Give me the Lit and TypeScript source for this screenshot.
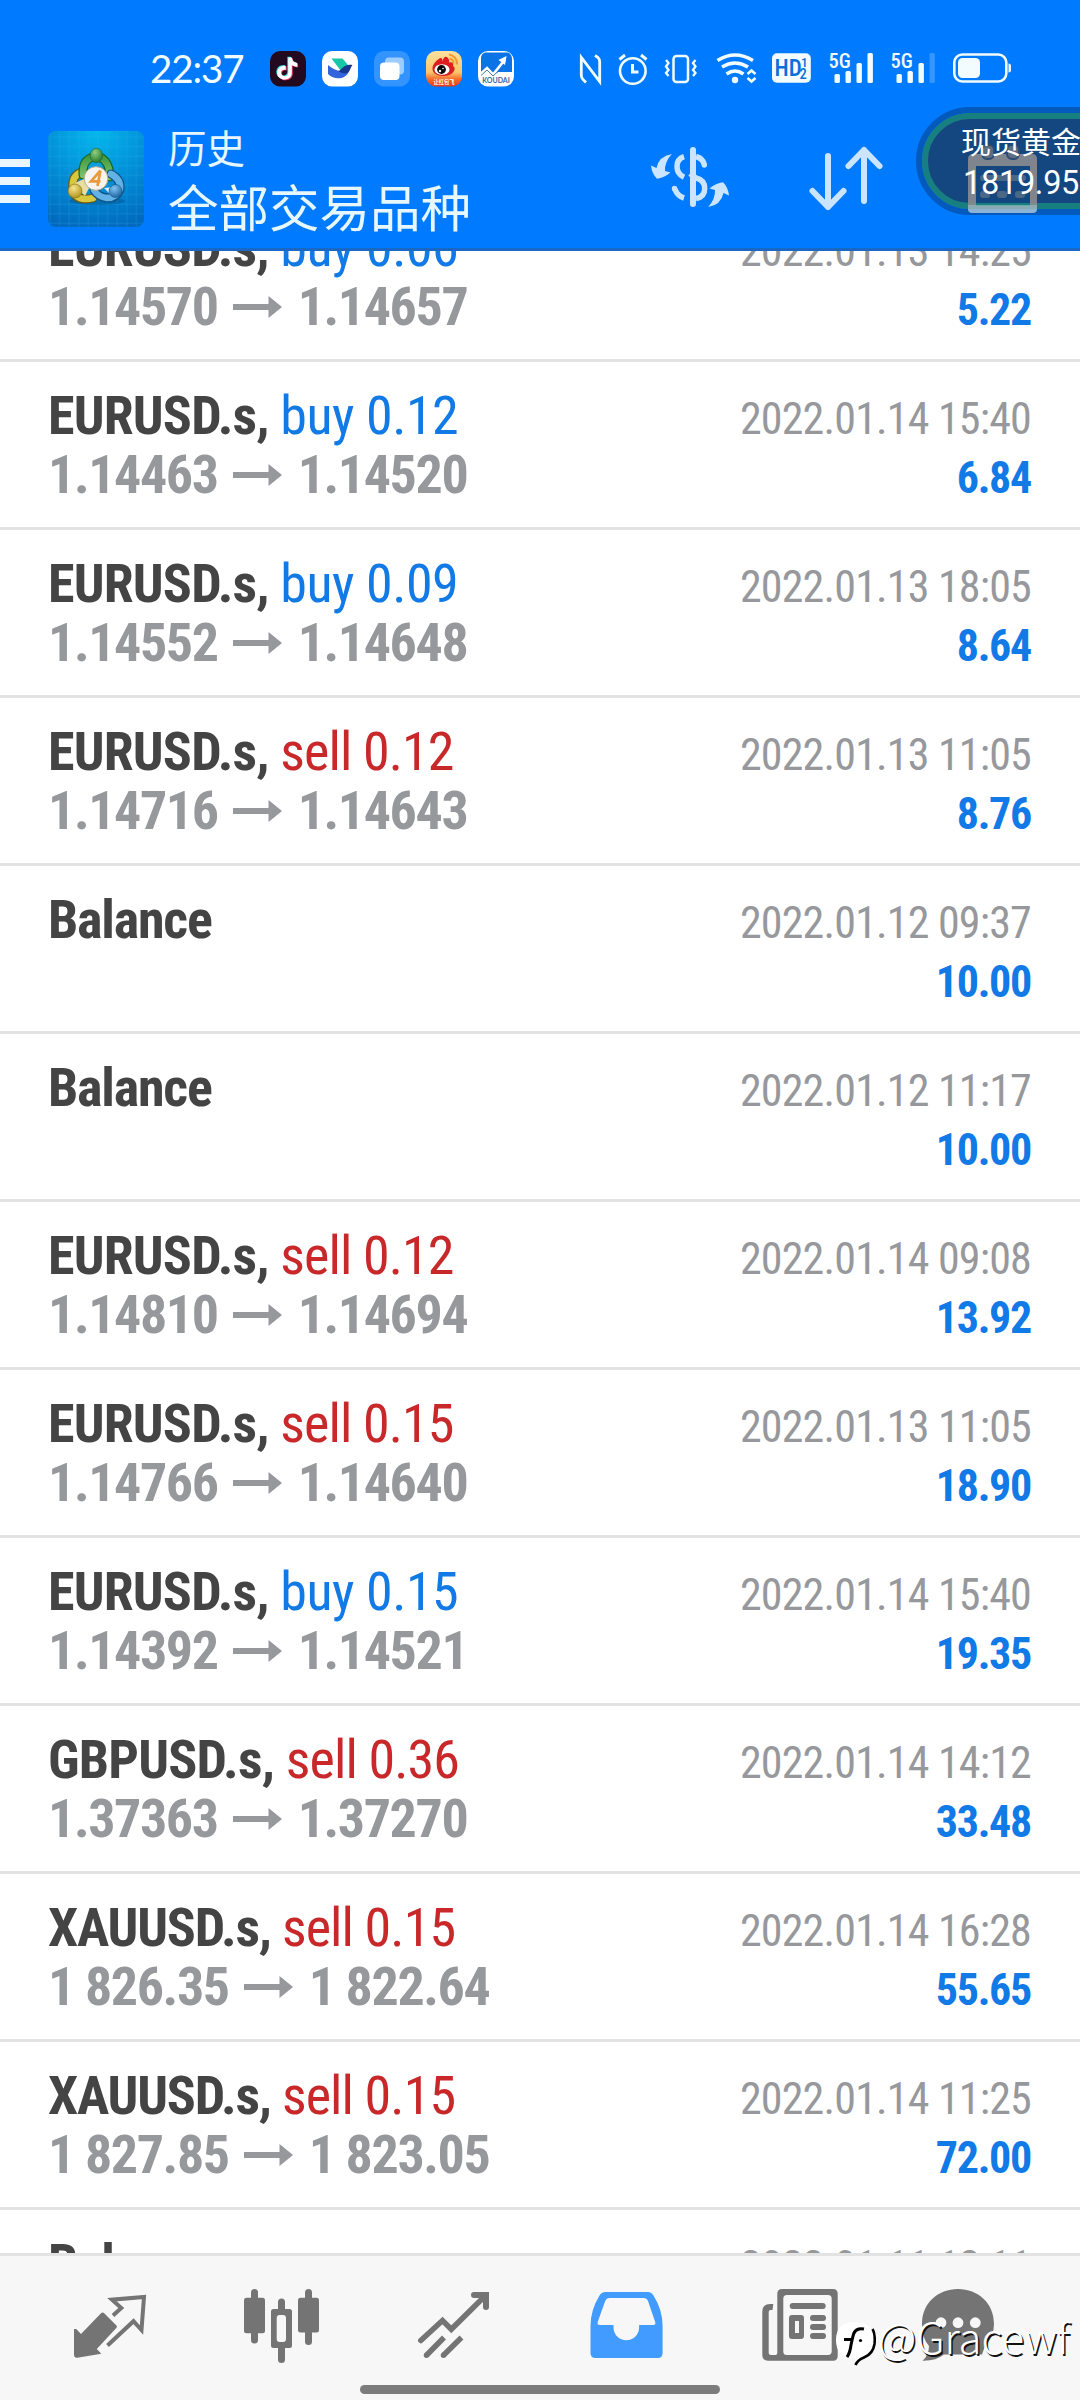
import { LitElement, html, svg, css, nothing } from 'lit';
import { customElement, property } from 'lit/decorators.js';

interface Deal {
  symbol: string;
  side?: 'buy' | 'sell';
  volume?: string;
  open?: string;
  close?: string;
  time: string;
  profit: string;
}

const deals: Deal[] = [
  { symbol: 'EURUSD.s', side: 'buy', volume: '0.06', open: '1.14570', close: '1.14657', time: '2022.01.13 14:25', profit: '5.22' },
  { symbol: 'EURUSD.s', side: 'buy', volume: '0.12', open: '1.14463', close: '1.14520', time: '2022.01.14 15:40', profit: '6.84' },
  { symbol: 'EURUSD.s', side: 'buy', volume: '0.09', open: '1.14552', close: '1.14648', time: '2022.01.13 18:05', profit: '8.64' },
  { symbol: 'EURUSD.s', side: 'sell', volume: '0.12', open: '1.14716', close: '1.14643', time: '2022.01.13 11:05', profit: '8.76' },
  { symbol: 'Balance', time: '2022.01.12 09:37', profit: '10.00' },
  { symbol: 'Balance', time: '2022.01.12 11:17', profit: '10.00' },
  { symbol: 'EURUSD.s', side: 'sell', volume: '0.12', open: '1.14810', close: '1.14694', time: '2022.01.14 09:08', profit: '13.92' },
  { symbol: 'EURUSD.s', side: 'sell', volume: '0.15', open: '1.14766', close: '1.14640', time: '2022.01.13 11:05', profit: '18.90' },
  { symbol: 'EURUSD.s', side: 'buy', volume: '0.15', open: '1.14392', close: '1.14521', time: '2022.01.14 15:40', profit: '19.35' },
  { symbol: 'GBPUSD.s', side: 'sell', volume: '0.36', open: '1.37363', close: '1.37270', time: '2022.01.14 14:12', profit: '33.48' },
  { symbol: 'XAUUSD.s', side: 'sell', volume: '0.15', open: '1 826.35', close: '1 822.64', time: '2022.01.14 16:28', profit: '55.65' },
  { symbol: 'XAUUSD.s', side: 'sell', volume: '0.15', open: '1 827.85', close: '1 823.05', time: '2022.01.14 11:25', profit: '72.00' },
  { symbol: 'Balance', time: '2022.01.11 12:11', profit: '10.00' },
];

@customElement('status-bar')
export class StatusBar extends LitElement {
  static styles = css`
    :host { display: flex; height: 40px; padding: 49px 0 0 150px; color: #f2fcff; }
    .time { width: 120px; font: 400 38.500px/38px Lato, sans-serif; letter-spacing: -1.1px; }
    .apps { display: flex; gap: 16px; padding-top: 2px; }
    .system { display: flex; gap: 16px; margin-left: 66px; padding-top: 1px; }
    svg { display: block; overflow: visible; }
    .label { font-family: Roboto, sans-serif; font-weight: 500; font-stretch: 75%; }
    .tiny { font-family: Lato, "Noto Sans CJK SC", sans-serif; font-weight: 700; }
  `;

  private signal(x: number, full: boolean) {
    return html`<svg width="46" height="40" viewBox="${x - 1} 50 46 40">
      <text class="label" x=${x - 0.5} y="68" font-size="20.500" fill="#f2fcff">5G</text>
      <g fill="#f2fcff">
        <rect x=${x + 5.5} y="74" width="5.4" height="9" rx="1.5"/>
        <rect x=${x + 16.5} y="71" width="5.4" height="12" rx="1.5"/>
        <rect x=${x + 27.5} y="63" width="5.4" height="20" rx="1.5"/>
        <rect x=${x + 38.5} y="53" width="5.4" height="30" rx="1.5" opacity=${full ? 1 : 0.22}/>
      </g>
    </svg>`;
  }

  render() {
    const note = 'M18.2 6.500h3.600c.3 3.400 2.400 5.200 5.400 5.500v3.800c-2 0-3.800-.6-5.400-1.700v8c0 9-14.600 8.300-14.600-.4 0-4.600 3.700-7.500 8.500-7v4.100c-2.700-.6-4.600.7-4.600 3 0 4.500 7.100 4.500 7.100-.4z';
    return html`
      <div class="time">22:37</div>
      <div class="apps">
        <svg width="36" height="36" viewBox="0 0 36 36">
          <rect width="36" height="35.500" rx="10" fill="#230a20"/>
          <path d=${note} fill="#35d8dc" transform="translate(-.9 -.7)"/>
          <path d=${note} fill="#f0446c" transform="translate(.9 .7)"/>
          <path d=${note} fill="#fff"/>
        </svg>
        <svg width="36" height="36" viewBox="0 0 36 36">
          <rect width="36" height="35.500" rx="10" fill="#fff"/>
          <path d="M9.500 7.500h11l5.500 6.500-7 6z" fill="#16c7a5"/>
          <path d="M6 14c6 5 11 7 18 5l4-2c-2 12-15 13-22 6z" fill="#3464dc"/>
          <path d="M16.500 20.500c4-3 6-8 14-6.500-2 2-2 5-4 7-2 2-6 1.500-10-.5z" fill="#16398f"/>
        </svg>
        <svg width="36" height="36" viewBox="0 0 36 36">
          <rect width="36" height="35.500" rx="10" fill="#fff" opacity=".2"/>
          <rect x="11" y="6.500" width="19" height="17" rx="4" fill="#fff" opacity=".52"/>
          <rect x="6" y="11.500" width="19.500" height="17.500" rx="4" fill="#fff"/>
        </svg>
        <svg width="36" height="36" viewBox="0 0 36 36">
          <defs>
            <linearGradient id="wb" x2="0" y2="1"><stop offset="0" stop-color="#fde0a0"/><stop offset=".6" stop-color="#fbc56a"/><stop offset=".8" stop-color="#f4692c"/><stop offset="1" stop-color="#e8381a"/></linearGradient>
          </defs>
          <rect width="36" height="35.500" rx="10" fill="url(#wb)"/>
          <path d="M6.500 18C6 13 12 8 14.500 7c2 0 2 2 2 3.500 1-4.500 3-6 5-4 1.500 1.500 2 3 1.500 5 3-1 5 0 4 3.500 2 1 2 3 1 5-2 4-7 5-11 5-6 0-10.500-3-10.500-7z" fill="#dd1e20"/>
          <ellipse cx="16" cy="18.500" rx="7.500" ry="5.300" fill="#fff"/>
          <circle cx="15.500" cy="18.500" r="4.400" fill="#0b0b0b"/><circle cx="14" cy="20" r="1.200" fill="#fff"/><circle cx="17" cy="17.500" r=".8" fill="#fff"/>
          <path d="M23 3.500a9 9 0 0 1 8 10M23.500 7.500a5 5 0 0 1 4 5" fill="none" stroke="#f29a2e" stroke-width="2.100"/>
          <text class="tiny" x="18" y="33" font-size="5.200" text-anchor="middle" fill="#fff">让红包飞</text>
        </svg>
        <svg width="36" height="36" viewBox="0 0 36 36">
          <rect width="36" height="35.500" rx="10" fill="#fff"/>
          <path d="M3 8c0-4 2-6.500 5-6.500h20c3.500 0 6 2.500 6 6.500v13H20l-5 3-6-6-6 5z" fill="#0a74e6"/>
          <path d="M2.500 23l6.500-6 6 6.500L27 8.500" fill="none" stroke="#fff" stroke-width="2.600"/>
          <path d="M3 24.500l6-5.500 6 6 5-4.500" fill="none" stroke="#4b7cab" stroke-width="1"/>
          <path d="M20.500 9L28.500 5l-1.500 9z" fill="#fff"/>
          <text class="tiny" x="18" y="31.500" font-size="7" text-anchor="middle" fill="#35699b">KOUDAI</text>
        </svg>
      </div>
      <div class="system">
        <svg width="23" height="40" viewBox="580 50 23 40" fill="none" stroke="#f2fcff" stroke-width="2.800">
          <path d="M586 82.500l-3-3Q581.300 78 581.300 75V57.500L599.700 81.500V62Q599.700 59 598 57.500L595 55.500"/>
        </svg>
        <svg width="29" height="40" viewBox="619 50 29 40" fill="none" stroke="#f2fcff" stroke-width="2.600">
          <circle cx="632.800" cy="71" r="12.800"/><path d="M632.500 64v8h6M619.500 59.500l5.500-4.500M646.500 59.500L641 55" stroke-width="3"/>
        </svg>
        <svg width="34" height="40" viewBox="664 50 34 40" fill="none" stroke="#f2fcff" stroke-width="2.500">
          <rect x="673.500" y="56" width="14.500" height="26" rx="3"/>
          <path d="M666 60l2.500 3-2.500 3.500 2.500 3.500-2.500 3 2.500 3M695.500 60l-2.500 3 2.500 3.500-2.500 3.500 2.500 3-2.500 3" stroke-width="2.300"/>
        </svg>
        <svg width="43" height="40" viewBox="714 50 43 40" fill="none" stroke="#f2fcff" stroke-width="3.600">
          <path d="M717.500 60.500q17.500-11 35.500 0M722 67q13-8 26 0M726.500 74q8.500-6 17 0"/>
          <circle cx="735" cy="80" r="3.200" fill="#f2fcff" stroke="none"/>
          <path d="M747.500 74l4-3.500 4 3.500M747.500 78l4 3.500 4-3.500" stroke-width="2.600"/>
        </svg>
        <svg width="39" height="40" viewBox="773 50 39 40">
          <rect x="772" y="53.300" width="38.800" height="29.500" rx="5" fill="#f2fcff"/>
          <text class="label" x="774.500" y="76" font-size="23" font-weight="700" fill="#0b6fd8">HD</text>
          <text class="label" x="801" y="67" font-size="13.500" fill="#0b6fd8">1</text>
          <text class="label" x="799.500" y="79" font-size="14.500" fill="#0b6fd8">2</text>
        </svg>
        ${this.signal(829, true)}
        ${this.signal(891, false)}
        <svg width="60" height="40" viewBox="952 50 60 40">
          <rect x="954.300" y="54.500" width="52" height="27" rx="8" fill="none" stroke="#f2fcff" stroke-width="2.600"/>
          <rect x="958" y="58" width="22" height="20" rx="4.500" fill="#f2fcff"/>
          <path d="M1008.500 63.500q2.500 0 2.500 2.500v4q0 2.500-2.500 2.500z" fill="#f2fcff"/>
        </svg>
      </div>`;
  }
}

@customElement('app-header')
export class AppHeader extends LitElement {
  static styles = css`
    :host { display: flex; height: 117px; padding-top: 42px; color: #e6f7ff; }
    svg { display: block; overflow: visible; flex: none; }
    .menu { margin-right: 18px; }
    .logo { margin-right: 24px; }
    .titles { width: 482px; margin-top: -13px; font-family: "Noto Sans CJK SC", sans-serif; }
    .title { font-size: 38.500px; line-height: 56px; }
    .subtitle { margin-top: 1px; font-size: 50.500px; line-height: 60px; white-space: nowrap; }
    .sort { margin-left: 79px; }
  `;

  render() {
    return html`
      <svg class="menu" width="30" height="96" viewBox="0 131 30 96" fill="#e9f6ff">
        <rect y="159" width="30" height="8"/><rect y="177" width="30" height="8"/><rect y="195" width="30" height="8"/>
      </svg>
      <svg class="logo" width="96" height="96" viewBox="0 0 96 96">
        <defs>
          <radialGradient id="bg" cx=".5" cy="0" r="1.050"><stop offset="0" stop-color="#03b8ec"/><stop offset=".5" stop-color="#0290d8"/><stop offset="1" stop-color="#0168bd"/></radialGradient>
          <pattern id="grid" width="9.600" height="9.600" patternUnits="userSpaceOnUse"><path d="M2 0v9.600M0 6h9.600" stroke="#35b5ee" stroke-width=".7" opacity=".32"/></pattern>
          <linearGradient id="gr" x2="0" y2="1"><stop offset="0" stop-color="#3f9a42"/><stop offset="1" stop-color="#7cc36e"/></linearGradient>
          <radialGradient id="gh" cx=".4" cy=".3" r=".8"><stop offset="0" stop-color="#8fd07f"/><stop offset="1" stop-color="#1b6d25"/></radialGradient>
          <radialGradient id="yh" cx=".4" cy=".3" r=".8"><stop offset="0" stop-color="#f5e58d"/><stop offset="1" stop-color="#a88a12"/></radialGradient>
          <radialGradient id="bh" cx=".4" cy=".3" r=".8"><stop offset="0" stop-color="#7fc4f2"/><stop offset="1" stop-color="#125c9c"/></radialGradient>
        </defs>
        <rect width="96" height="96" rx="8" fill="url(#bg)"/>
        <rect width="96" height="96" rx="8" fill="url(#grid)"/>
        <ellipse cx="49" cy="70" rx="28" ry="4" fill="#01406f" opacity=".3"/>
        <g stroke-linecap="round" fill="none">
          <path d="M25 57q-2-13 11-17M27 64q6 6 18 3" stroke="#6d5e10" stroke-width="9"/>
          <path d="M25 57q-2-13 11-17M27 64q6 6 18 3" stroke="#d8c840" stroke-width="6.500"/>
          <path d="M35 44q-1-15 10-18 12-2 16 12v8" stroke="#1d6526" stroke-width="9"/>
          <path d="M35 44q-1-15 10-18 12-2 16 12v8" stroke="url(#gr)" stroke-width="6.500"/>
          <path d="M63 43q10 5 9 15-3 9-13 9-9-1-13-8" stroke="#125287" stroke-width="9"/>
          <path d="M63 43q10 5 9 15-3 9-13 9-9-1-13-8" stroke="#62b2e6" stroke-width="6.500"/>
        </g>
        <path d="M30 58l-3-6 9-4 5 9-4 8z" fill="#e9dda0"/>
        <path d="M56 57l9-1-3 7z" fill="#d8ecf8"/>
        <ellipse cx="48.300" cy="24.500" rx="6.200" ry="7.200" fill="url(#gh)" stroke="#1d6526" stroke-width=".6"/>
        <circle cx="27" cy="60" r="7" fill="url(#yh)" stroke="#806d10" stroke-width=".6"/>
        <circle cx="67.500" cy="60" r="6.500" fill="url(#bh)" stroke="#125287" stroke-width=".6"/>
        <circle cx="48" cy="47.500" r="11.800" fill="#f7f4f0" stroke="#b9ad86" stroke-width="1"/>
        <path d="M52.500 39.500L43 50.300h9.500M52.500 39.500L49.500 55" fill="none" stroke="#e89a3c" stroke-width="2.700"/>
      </svg>
      <div class="titles">
        <div class="title">历史</div>
        <div class="subtitle">全部交易品种</div>
      </div>
      <svg width="80" height="96" viewBox="650 131 80 96" fill="none" stroke="#cce5ff" stroke-width="5.500">
        <path d="M693 150v54" stroke-width="6" stroke-linecap="round"/>
        <path d="M684 156.700Q677 159 677 166.500T684 177.300"/>
        <path d="M684 198Q677.500 196 674.800 189"/><circle cx="674.500" cy="188.500" r="2.700" fill="#cce5ff" stroke="none"/>
        <path d="M696 156.500Q703 158.500 704.300 164.500"/><circle cx="704.300" cy="165" r="2.700" fill="#cce5ff" stroke="none"/>
        <path d="M690 173.500l6 4.500Q704.700 180 704.700 188.500T696 198.500"/>
        <g fill="#cce5ff" stroke="none">
          <path d="M671.800 154Q659 156 656.500 168L651 165.500Q652 174 657 178.800Q664 178 670.500 172.500L665 171Q664.500 162 671.800 154z"/>
          <path d="M671.800 154Q659 156 656.500 168L651 165.500Q652 174 657 178.800Q664 178 670.500 172.500L665 171Q664.500 162 671.800 154z" transform="rotate(180 690 180.500)"/>
        </g>
      </svg>
      <svg class="sort" width="74" height="96" viewBox="809 131 74 96" fill="none" stroke="#cce5ff" stroke-width="6" stroke-linecap="round" stroke-linejoin="round">
        <path d="M828 156v51M812.500 191l15.500 16 15.500-16M864 201v-51M848.500 166l15.500-16 15.500 16"/>
      </svg>`;
  }
}

@customElement('price-bubble')
export class PriceBubble extends LitElement {
  static styles = css`
    :host { display: block; position: absolute; left: 916px; top: 107px; width: 164px; height: 108px; overflow: hidden; }
    .calendar { position: absolute; left: 52px; top: 42px; overflow: visible; }
    .pill { position: absolute; left: 0; top: 0; box-sizing: border-box; width: 260px; height: 108px; border: 6px solid #0359bc; border-radius: 54px; }
    .ring { box-sizing: border-box; height: 96px; border: 6px solid #177f80; border-radius: 48px; background: #14467f; }
    .text { position: absolute; left: 45px; top: 14px; white-space: nowrap; color: #fff; }
    .name { font: 400 30px/38px "Noto Sans CJK SC", sans-serif; }
    .price { margin-top: 2px; padding-left: 2px; font: 400 32.500px/44px Roboto, sans-serif; letter-spacing: -.3px; }
  `;

  render() {
    return html`
      <div class="pill"><div class="ring"></div></div>
      <svg class="calendar" width="70" height="66" viewBox="0 0 70 66">
        <path d="M6 5H64q5 0 5 5V59q0 5-5 5H5q-5 0-5-5V10q0-5 6-5zM8 17V57H62V17z" fill="#8d8e92" fill-rule="evenodd" opacity=".88"/>
        <path d="M0 56h69v5q0 3-5 3H5q-5 0-5-3z" fill="#8fb6c0" opacity=".75"/>
        <path d="M0 60h69q-1 4-5 4H5q-4 0-5-4z" fill="#8db8e8" opacity=".6"/>
        <g fill="#5f6d80" stroke="#2d4c75" stroke-width="2"><rect x="14" y="-4" width="12" height="14" rx="5"/><rect x="39" y="-4" width="12" height="14" rx="5"/></g>
        <g fill="#5d7288" opacity=".75"><rect x="12" y="26" width="46" height="6" rx="3"/><rect x="12" y="42" width="10" height="7" rx="3"/><rect x="29" y="42" width="10" height="7" rx="3"/><rect x="47" y="42" width="10" height="7" rx="3"/></g>
      </svg>
      <div class="text">
        <div class="name">现货黄金</div>
        <div class="price">1819.95</div>
      </div>`;
  }
}

@customElement('deal-row')
export class DealRow extends LitElement {
  @property({ attribute: false }) deal!: Deal;

  static styles = css`
    :host { display: flex; justify-content: space-between; flex: none; box-sizing: border-box; height: 168px; padding: 24px 49px 0 48px; border-bottom: 3px solid #e3e3e3; background: #fff; font-family: Roboto, sans-serif; font-stretch: 75%; line-height: 59px; white-space: nowrap; }
    .head, .prices { height: 59px; font-size: 54px; }
    .symbol { font-weight: 700; color: #444; letter-spacing: -.8px; }
    .tight { letter-spacing: -1.2px; }
    .buy { color: #117ae6; letter-spacing: -.5px; }
    .sell { color: #c82829; letter-spacing: -.9px; }
    .prices { display: flex; align-items: center; gap: 15.500px; font-weight: 700; letter-spacing: -1.400px; color: #97989c; }
    .meta { padding-top: 3.500px; font-size: 44px; text-align: right; }
    .time { color: #97989c; letter-spacing: -.82px; }
    .profit { font-weight: 700; color: #117ae6; letter-spacing: -1.300px; }
  `;

  render() {
    const d = this.deal;
    const tight = d.symbol === 'Balance' || d.symbol.startsWith('XAU') ? 'tight' : '';
    return html`
      <div>
        <div class="head"><span class="symbol ${tight}">${d.symbol}${d.side ? ', ' : nothing}</span>${d.side ? html`<span class=${d.side}>${d.side} ${d.volume}</span>` : nothing}</div>
        ${d.open ? html`<div class="prices">
          <span>${d.open}</span>
          <svg width="49" height="22" viewBox="0 0 49 22"><path d="M0 8h35.500V0L49 11 35.500 22V14H0z" fill="#97989c"/></svg>
          <span>${d.close}</span>
        </div>` : nothing}
      </div>
      <div class="meta">
        <div class="time">${d.time}</div>
        <div class="profit">${d.profit}</div>
      </div>`;
  }
}

const tabIcons = [
  svg`<path d="M74 2329h2.200l4.800 5 20-20.700q1.600-1.500 3.200 0l12.300 12.200q1 1.200 0 2.300L96.800 2349l4.500 4.800-24 3.900q-3.300.3-3.300-3z"/>
    <path d="M107.500 2345.500L133.500 2321.200 141.500 2330 144 2297 112 2299.700 121.300 2308 113 2315.500" fill="none" stroke="#747474" stroke-width="4"/>`,
  svg`<rect x="251" y="2289" width="7" height="54.500" rx="3.500"/><rect x="244" y="2297.700" width="21" height="35.500" rx="2.500"/>
    <rect x="278" y="2298.500" width="7" height="64.500" rx="3.500"/><rect x="271" y="2309" width="21" height="39" rx="2.500"/><rect x="276.700" y="2315" width="9.300" height="27" rx="3" fill="#f7f7f7"/>
    <rect x="305" y="2289" width="7" height="56" rx="3.500"/><rect x="298" y="2297.700" width="21" height="34.700" rx="2.500"/>`,
  svg`<g fill="none" stroke="#747474" stroke-width="5.500"><path d="M420.800 2340.500L442.500 2320.500 451.300 2329.300 486 2295" stroke-linecap="round"/><path d="M474 2295h12v12" stroke-width="6" stroke-linecap="round"/>
    <path d="M426.500 2355.300L444 2337.500M443.500 2355.300L461.500 2337.500"/></g><circle cx="426.500" cy="2355.200" r="2.750"/><circle cx="443.500" cy="2355.200" r="2.750"/>`,
  svg`<path fill="#429cff" fill-rule="evenodd" d="M605.500 2292H648q3.500 0 5.500 3.500Q662.600 2310 662.600 2326V2353q0 5-5 5H595.500q-5 0-5-5V2326Q590.500 2310 599.500 2295.500 601.500 2292 605.500 2292zM609.500 2298q-3 0-4.300 3L597.700 2322q-.8 3 2 3H613.500v2.500a12.800 12.800 0 0 0 25.600 0V2325H653q3.200 0 2.200-3L648 2301q-1.200-3-4.200-3z"/>`,
  svg`<path fill-rule="evenodd" d="M782 2289H833q4.700 0 4.700 4.700V2356q0 4.700-4.700 4.700H768q-5.700 0-5.700-5.700V2311.500Q762.300 2304 770 2304h3.300l-.8 6h-2q-1.800 0-1.800 2V2352.500q0 2.500 2.500 2.500h3.500q2.600 0 2.600-2.600V2293.700Q777.300 2289 782 2289zM787 2295q-3.700 0-3.700 3.700V2351.500q0 3.500 3.500 3.500H828q3.700 0 3.700-3.700V2298.700q0-3.700-3.700-3.700z"/>
    <rect x="789.700" y="2303" width="36" height="6" rx="3"/><path fill-rule="evenodd" d="M792 2315h9q3 0 3 3v18q0 3-3 3h-9q-3 0-3-3v-18q0-3 3-3zM795 2321v12h4v-12z"/>
    <rect x="810" y="2315" width="16" height="6" rx="3"/><rect x="810" y="2324" width="16" height="6" rx="3"/><rect x="810" y="2333" width="16" height="6" rx="3"/>`,
  svg`<path d="M922 2324C922 2303 938 2289 958 2289S994 2303 994 2324Q994 2337 985 2346L982 2354.500H944Q936 2361 922.500 2360.700 929 2355 929 2346 922 2338 922 2324z"/>
    <g fill="#f7f7f7"><circle cx="941" cy="2322.700" r="5.400"/><circle cx="958" cy="2322.700" r="5.400"/><circle cx="975.300" cy="2322.700" r="5.400"/></g>`,
];

@customElement('tab-bar')
export class TabBar extends LitElement {
  static styles = css`
    :host { display: block; flex: none; box-sizing: border-box; height: 147px; border-top: 3px solid #e3e3e3; background: #f7f7f7; }
    .tabs { display: grid; grid-template-columns: repeat(6, 173px); padding-left: 22px; }
    .tab { display: block; fill: #747474; }
    .home { width: 360px; height: 9px; margin: 9px auto 0; border-radius: 5px; background: #7c7c7c; }
  `;

  render() {
    return html`
      <div class="tabs">
        ${tabIcons.map((icon, i) => html`<svg class="tab" width="173" height="120" viewBox="${22 + i * 173} 2256 173 120">${icon}</svg>`)}
      </div>
      <div class="home"></div>`;
  }
}

@customElement('app-root')
export class AppRoot extends LitElement {
  static styles = css`
    :host { display: flex; flex-direction: column; position: relative; width: 1080px; height: 2400px; overflow: hidden; background: #fff; }
    .top { flex: none; box-sizing: border-box; height: 251px; border-bottom: 3px solid #1868c4; background: #007aff; overflow: hidden; }
    .list { display: flex; flex: 1; flex-direction: column; min-height: 0; overflow: hidden; }
    .list > :first-child { margin-top: -57px; }
    .watermark { position: absolute; left: 836px; top: 2312px; display: flex; align-items: flex-start; color: #fff; font: 300 42px/48px "Noto Sans CJK SC", sans-serif; text-shadow: 1.500px 1.500px 0 #111; }
    .mark { margin: 8px 2px 0 0; }
  `;

  render() {
    return html`
      <div class="top"><status-bar></status-bar><app-header></app-header></div>
      <price-bubble></price-bubble>
      <div class="list">${deals.map((d) => html`<deal-row .deal=${d}></deal-row>`)}</div>
      <tab-bar></tab-bar>
      <div class="watermark">
        <svg class="mark" width="40" height="47" viewBox="0 0 40 47">
          <path d="M19 2Q38 2 38 20 38 33 28 38L20 43 18.500 38Q0 38 0 20 0 2 19 2z" fill="#fff"/>
          <path d="M36.500 9Q39.500 14 38.500 24 37 34 28 37.500 21.500 40 19.500 45" fill="none" stroke="#000" stroke-width="2.600"/>
          <path d="M28 9Q19 7 17 16L15 25Q14 33 11 37M8 19.500h9" fill="none" stroke="#000" stroke-width="3"/>
          <circle cx="24.500" cy="20.500" r="1.600"/>
        </svg>
        <span>@Gracewf</span>
      </div>`;
  }
}
